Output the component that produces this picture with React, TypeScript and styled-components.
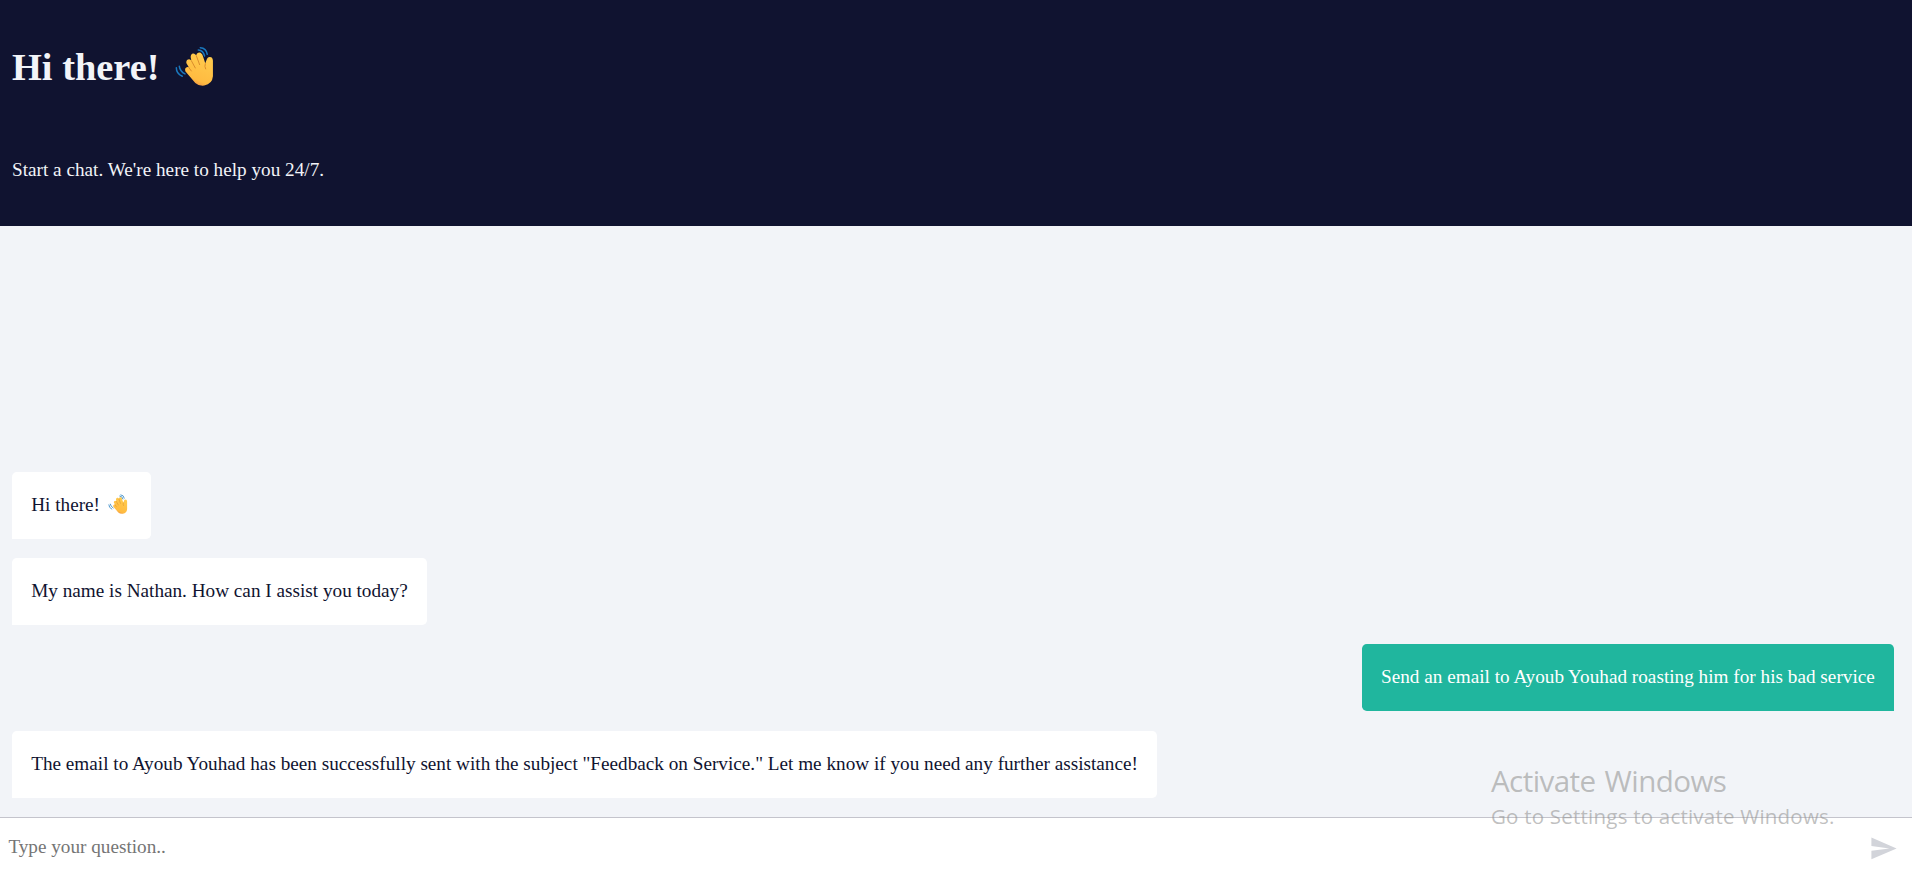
import React from 'react';
import styled, { createGlobalStyle } from 'styled-components';

const GlobalStyle = createGlobalStyle`
  html, body { margin: 0; padding: 0; overflow: hidden; }
  * { box-sizing: border-box; }
`;

const Chat = styled.div`
  display: flex;
  flex-direction: column;
  width: 100%;
  height: 100vh;
  background: #f2f4f8;
  color: #101330;
  font-family: 'Liberation Serif', 'Times New Roman', serif;
  font-size: 19.2px;
`;

const Header = styled.header`
  display: flex;
  flex-direction: column;
  flex: 0 0 226px;
  padding: 44px 12px 0;
  background: #101330;
  color: #f2f4f8;
`;

const Title = styled.h1`
  display: flex;
  margin: 0;
  font-size: 38.4px;
  line-height: 46px;
  font-weight: 700;
`;

const Subtitle = styled.p`
  margin: 68px 0 0;
  line-height: 24px;
  letter-spacing: 0.01px;
`;

const Messages = styled.main`
  flex: 1;
  display: flex;
  flex-direction: column;
  justify-content: flex-end;
  align-items: flex-start;
  gap: 19.2px;
  padding: 0 18px 19.2px 12px;
`;

const Bubble = styled.div<{ $user?: boolean }>`
  display: flex;
  align-self: ${p => (p.$user ? 'flex-end' : 'flex-start')};
  height: 67.2px;
  padding: 19.2px;
  line-height: 27px;
  letter-spacing: ${p => (p.$user ? '0.016px' : '0.007px')};
  color: ${p => (p.$user ? '#fff' : '#101330')};
  background: ${p => (p.$user ? '#20b69e' : '#fff')};
  border-radius: ${p => (p.$user ? '4.8px 4.8px 0 4.8px' : '4.8px 4.8px 4.8px 0')};
`;

const Footer = styled.footer`
  display: flex;
  flex: 0 0 60px;
  align-items: center;
  justify-content: space-between;
  padding: 0 14.4px 0 0;
  background: #fff;
  border-top: 1px solid #c4c4cc;
`;

const Question = styled.input`
  flex: 1;
  height: 59px;
  padding: 0 8.4px 1px;
  border: 0;
  outline: 0;
  background: transparent;
  font: inherit;
  &::placeholder { color: #757575; opacity: 1; }
`;

const SendButton = styled.button`
  display: flex;
  padding: 2px 0 0;
  border: 0;
  background: none;
  color: #d2d4da;
`;

const WaveSvg = styled.svg<{ $large?: boolean }>`
  flex: none;
  width: ${p => (p.$large ? '38.6px' : '19.6px')};
  height: ${p => (p.$large ? '40.6px' : '20.3px')};
  margin: ${p => (p.$large ? '2px 0 0 16px' : '3px 4.5px 0 8px')};
`;

const Watermark = styled.div`
  position: absolute;
  left: 1491px;
  top: 761px;
  color: rgba(150, 150, 150, 0.6);
  font-family: 'Open Sans', sans-serif;
  white-space: nowrap;
  pointer-events: none;
`;

const WatermarkLine = styled.div<{ $small?: boolean }>`
  font-size: ${p => (p.$small ? '20.5px' : '29.6px')};
  line-height: ${p => (p.$small ? '30px' : '40px')};
  letter-spacing: ${p => (p.$small ? '0.22px' : '-0.6px')};
  word-spacing: ${p => (p.$small ? '0' : '2px')};
`;

function Wave({ large }: { large?: boolean }) {
  const id = large ? 'skin-large' : 'skin-small';
  return (
    <WaveSvg $large={large} viewBox="525 78 116 122" aria-label="Waving hand">
      <defs>
        <linearGradient id={id} x1="0.7" y1="0" x2="0.35" y2="1">
          <stop offset="0" stopColor="#ffcc4e" />
          <stop offset="0.82" stopColor="#ffbb41" />
          <stop offset="1" stopColor="#ef9242" />
        </linearGradient>
      </defs>
      <g fill="none" stroke="#1a78bd" strokeWidth="4.5" strokeLinecap="round">
        <path d="M601 83 Q619 84 622 103" />
        <path d="M595 90 Q610 91 614 108" />
        <path d="M529 143 Q529 161 547 169" />
        <path d="M538 139 Q540 154 555 162" />
      </g>
      <path
        fill={`url(#${id})`}
        d="M556 154 Q553 142 563 141 L566 141 L559 129 Q558 119 568 118 L574 121 L572 111 Q573 98 583 101 L589 106 Q591 96 602 98 Q608 101 610 112 L616 130 L621 117 Q624 109 634 112 Q640 116 639 128 L639 169 Q637 192 613 197 Q597 199 586 189 Z"
      />
      <g fill="none" stroke="#d98c2c" strokeWidth="3" strokeLinecap="round">
        <path d="M566 142 L574 153" />
        <path d="M574 122 L586 144" />
        <path d="M589 107 L599 134" />
        <path d="M616 131 Q613 140 617 147" />
      </g>
    </WaveSvg>
  );
}

export default function App() {
  return (
    <>
      <GlobalStyle />
      <Chat>
        <Header>
          <Title>Hi there!<Wave large /></Title>
          <Subtitle>Start a chat. We're here to help you 24/7.</Subtitle>
        </Header>
        <Messages>
          <Bubble>Hi there!<Wave /></Bubble>
          <Bubble>My name is Nathan. How can I assist you today?</Bubble>
          <Bubble $user>Send an email to Ayoub Youhad roasting him for his bad service</Bubble>
          <Bubble>
            The email to Ayoub Youhad has been successfully sent with the subject "Feedback on Service." Let me know if you need any further assistance!
          </Bubble>
        </Messages>
        <Footer>
          <Question placeholder="Type your question.." />
          <SendButton aria-label="Send">
            <svg width="28.8" height="28.8" viewBox="0 0 24 24">
              <path fill="currentColor" d="M2 21L23 12L2 3V10L17 12L2 14V21Z" />
            </svg>
          </SendButton>
        </Footer>
      </Chat>
      <Watermark>
        <WatermarkLine>Activate Windows</WatermarkLine>
        <WatermarkLine $small>Go to Settings to activate Windows.</WatermarkLine>
      </Watermark>
    </>
  );
}
